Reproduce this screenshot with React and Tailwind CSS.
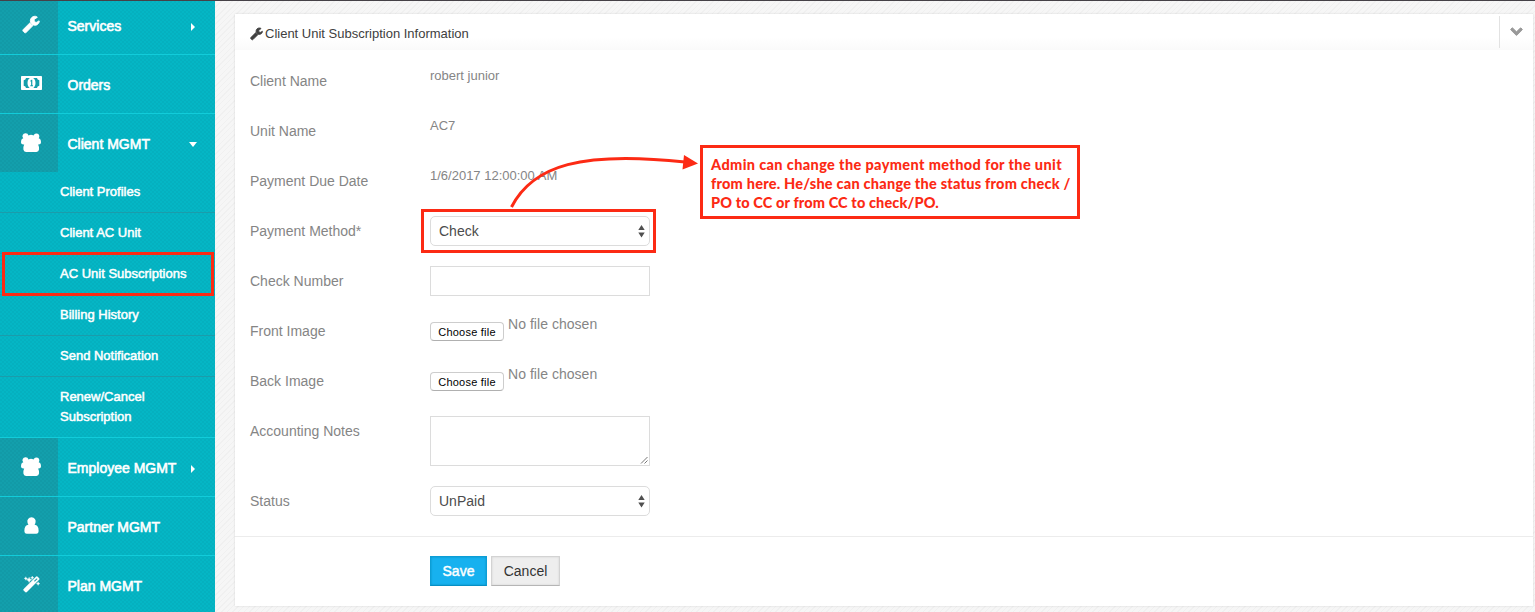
const PATHS = {
  wrench: ['0 0 1792 1792', 'M1092 1052l-682 682q-37 37-90 37-52 0-91-37l-106-108q-38-36-38-90 0-53 38-91l681-681q39 98 114.5 173.5t173.5 114.5zm634-435q0 39-23 106-47 134-164.5 217.5t-258.5 83.5q-185 0-316.5-131.5t-131.5-316.5 131.5-316.5 316.5-131.5q58 0 121.5 16.5t107.5 46.5q16 11 16 28t-16 28l-293 169v224l193 107q5-3 79-48.5t135.5-81 70.5-35.5q15 0 23.5 10t8.5 25z'],
  users: ['0 0 20 19', 'M4.500 .2a3 3 0 0 1 3 2.300q2.500-1.500 5 0a3 3 0 1 1 5.200 2.800q2.300 .5 2.300 4.200 0 1.900-2.400 1.900h-.5q1.200 2 .9 5.200-.2 2.400-2.600 2.400H5q-2.400 0-2.600-2.400-.3-3.200 .8-5.200h-.8Q0 11.400 0 9.500q0-3.700 2.300-4.200A3 3 0 0 1 4.500 .2z'],
  user: ['0 0 16 18', 'M8 .3a4.400 4.400 0 0 1 4.200 5.900l-.9 2.100q4.300 .6 4.300 6.300 0 3.100-2.600 3.100H3Q.4 17.700 .4 14.600q0-5.700 4.300-6.300l-.9-2.100A4.400 4.400 0 0 1 8 .3z'],
  magic: ['0 0 18 18', 'M13.800 .8q.8-.8 1.600 0l1.500 1.500q.8 .8 0 1.600L4 16.900q-.8 .8-1.600 0L.8 15.300q-.8-.8 0-1.600zM14.400 2.300L11.500 5.200l1 1 2.900-2.900zM3 .7l.6 1.300 1.300.6-1.300.6L3 4.500l-.6-1.300-1.300-.6L2.400 2zM6.500 1.200l.9 2 2 .9-2 .9-.9 2-.9-2-2-.9 2-.9zM9.800 0l.6 1.300 1.300.6-1.300.6-.6 1.300-.6-1.300-1.300-.6 1.300-.6zM16 6.200l.6 1.300 1.300.6-1.300.6L16 10l-.6-1.300-1.300-.6 1.300-.6z'],
  chevron: ['0 0 1792 1792', 'M1683 808l-742 741q-19 19-45 19t-45-19l-742-741q-19-19-19-45.5t19-45.5l166-165q19-19 45-19t45 19l531 531 531-531q19-19 45-19t45 19l166 165q19 19 19 45.5t-19 45.5z'],
};

function Icon({ name, className }) {
  if (name === 'money') {
    return (
      <svg viewBox="0 0 21 14" className={className} aria-hidden="true">
        <rect width="21" height="14" rx="0.8" fill="#fff" />
        <path d="M5 2h11q.2 2 2.300 2.300v5.400Q16.200 10 16 12H5q-.2-2-2.300-2.300V4.300Q4.800 4 5 2z" fill="#139fac" />
        <ellipse cx="10.500" cy="7" rx="4" ry="5.600" fill="#fff" />
        <path d="M9.300 4.800l1.200-1h.8v5.400h.7v1H9.300v-1h.8V5.400l-.4.300z" fill="#139fac" />
      </svg>
    );
  }
  const [box, d] = PATHS[name];
  return (
    <svg viewBox={box} className={`overflow-visible ${className}`} fill="currentColor" aria-hidden="true">
      <path d={d} stroke="currentColor" />
    </svg>
  );
}

function Caret({ open }) {
  return (
    <svg viewBox="0 0 8 8" className="mt-[3px] mr-[18px] size-2" fill="#fff" aria-hidden="true">
      <path d={open ? 'M0 1h8L4 6z' : 'M2 0l4 4-4 4z'} />
    </svg>
  );
}

function NavItem({ icon, iconClass, label, caret, className = 'h-[59px] border-b' }) {
  return (
    <div className={`flex shrink-0 border-[#12ccda] ${className}`}>
      <div className="flex w-[58px] items-center justify-center bg-[#139fac] bg-[repeating-conic-gradient(#00000008_0_25%,transparent_0_50%)] bg-size-[4px_4px] pb-0.5 pl-1">
        <Icon name={icon} className={iconClass} />
      </div>
      <div className="flex flex-1 items-center pl-[9.5px]">
        <span className="flex-1 pt-0.5 text-sm whitespace-nowrap [-webkit-text-stroke:0.6px_#fff]">{label}</span>
        {caret && <Caret open={caret === 'open'} />}
      </div>
    </div>
  );
}

const SUB_ITEMS = ['Client Profiles', 'Client AC Unit', 'AC Unit Subscriptions', 'Billing History', 'Send Notification'];

function Sidebar() {
  return (
    <nav className="flex w-[215px] shrink-0 flex-col overflow-hidden bg-[#05b6c5] bg-[repeating-conic-gradient(#00000008_0_25%,transparent_0_50%)] bg-size-[4px_4px] text-white">
      <NavItem icon="wrench" iconClass="size-[18px] stroke-[90]" label="Services" caret="closed" className="-mt-[5px] h-[59px] border-b" />
      <NavItem icon="money" iconClass="h-[14px] w-[21px]" label="Orders" />
      <NavItem icon="users" iconClass="mt-px h-[19px] w-5 stroke-0" label="Client MGMT" caret="open" className="h-[58px]" />
      <ul className="text-[13px] leading-5 [-webkit-text-stroke:0.5px_#fff]">
        {SUB_ITEMS.map((item) => (
          <li key={item} className="h-[41px] border-b border-[#1b9cab] pt-[10px] pl-[60px] whitespace-nowrap">{item}</li>
        ))}
        <li className="h-[61px] border-b border-[#12ccda] pt-[10px] pr-12 pl-[60px]">Renew/Cancel Subscription</li>
      </ul>
      <NavItem icon="users" iconClass="h-[19px] w-5 stroke-0" label="Employee MGMT" caret="closed" />
      <NavItem icon="user" iconClass="mt-px h-[17px] w-[15px] stroke-0" label="Partner MGMT" />
      <NavItem icon="magic" iconClass="size-[17px] stroke-[0.3]" label="Plan MGMT" />
    </nav>
  );
}

function Row({ label, children, className = 'h-[50px]' }) {
  return (
    <div className={`flex items-start ${className}`}>
      <div className="w-[180px] shrink-0 leading-[30px]">{label}</div>
      {children}
    </div>
  );
}

function SelectBox({ value }) {
  return (
    <div className="flex h-[30px] w-[220px] items-center justify-between rounded-[5px] border border-[#dcdcdc] bg-white pr-1 pl-2 text-[#4c4c4c]">
      <span>{value}</span>
      <svg viewBox="0 0 7 14" className="h-3.5 w-[7px]" fill="#505050" aria-hidden="true">
        <path d="M3.500 1L6.700 6H.3zM3.500 13.500L.3 8.500h6.400z" />
      </svg>
    </div>
  );
}

function FileInput() {
  return (
    <div className="flex items-start">
      <button className="mt-[6px] h-[19px] w-[74px] rounded-[4px] border border-[#cdcdcd] border-b-[#b0b0b0] bg-white pt-px text-[11px] leading-[17px] tracking-[0.22px] whitespace-nowrap text-black">Choose file</button>
      <span className="ml-1 leading-[17px] tracking-[0.04px]">No file chosen</span>
    </div>
  );
}

export default function App() {
  return (
    <div className="relative flex h-[612px] w-[1535px] overflow-hidden border-t border-[#454147] bg-[#f6f6f6] font-['Liberation_Sans',Arial,sans-serif] text-sm text-[#858585]">
      <Sidebar />
      <main className="min-w-0 flex-1 bg-[repeating-linear-gradient(135deg,#00000006_0_1px,transparent_1px_4px)] pt-[13px] pl-5">
        <section className="h-[592px] w-[1298px] bg-white shadow-[0_0_2px_#00000020]">
          <header className="flex h-9 items-start justify-between bg-linear-to-b from-white from-65% to-[#fafafa]">
            <h1 className="flex items-center gap-0.5 pt-2 pl-[15px] text-[13px] leading-6 text-[#404040]">
              <Icon name="wrench" className="mb-0.5 size-[13px] stroke-[110]" />
              <span>Client Unit Subscription Information</span>
            </h1>
            <div className="mt-0.5 flex h-8 w-[34px] justify-center border-l border-[#e2e2e2] pt-2 text-[#999]">
              <Icon name="chevron" className="size-[13px] stroke-[130]" />
            </div>
          </header>
          <div className="h-[487px] border-b border-[#ececec] pt-4 pl-[15px]">
            <Row label="Client Name"><span className="text-[13px] leading-5">robert junior</span></Row>
            <Row label="Unit Name"><span className="text-[13px] leading-5">AC7</span></Row>
            <Row label="Payment Due Date"><span className="text-[13px] leading-5">1/6/2017 12:00:00 AM</span></Row>
            <Row label="Payment Method*"><SelectBox value="Check" /></Row>
            <Row label="Check Number"><div className="h-[30px] w-[220px] border border-[#dcdcdc]" /></Row>
            <Row label="Front Image"><FileInput /></Row>
            <Row label="Back Image"><FileInput /></Row>
            <Row label="Accounting Notes" className="h-[70px]">
              <div className="flex h-[50px] w-[220px] items-end justify-end border border-[#dcdcdc]">
                <svg viewBox="0 0 9 9" className="size-[9px]" stroke="#666" strokeWidth="0.9" aria-hidden="true">
                  <path d="M1 7.500L7.500 1M4.500 7.500L7.500 4.500" />
                </svg>
              </div>
            </Row>
            <Row label="Status"><SelectBox value="UnPaid" /></Row>
          </div>
          <div className="flex gap-1 pt-[19px] pl-[195px]">
            <button className="h-[30px] w-[57px] border border-[#0c9ed6] border-b-[#078fc4] bg-[#17b1ef] text-white shadow-[inset_0_0_2px_#0888b8] [-webkit-text-stroke:0.45px_#fff]">Save</button>
            <button className="h-[30px] w-[69px] border border-[#d3d3d3] border-b-[#b5b5b5] bg-[#eee] text-[#333] shadow-[inset_0_0_2px_#ccc]">Cancel</button>
          </div>
        </section>
      </main>

      <div className="absolute top-[251px] left-[2px] h-[44px] w-[212px] border-3 border-[#fc2a14]" />
      <div className="absolute top-[208px] left-[421px] h-[44px] w-[235px] border-3 border-[#fc2a14]" />
      <svg viewBox="500 145 200 70" className="absolute top-[144px] left-[500px] h-[70px] w-[200px]" fill="none" aria-hidden="true">
        <path d="M511.500 207C533 165 582 151 685 162" stroke="#fc2a14" strokeWidth="3" />
        <path d="M684 155L698 163.500L682.500 169.500Z" fill="#fc2a14" />
      </svg>
      <div className="absolute top-[144px] left-[700px] h-[74px] w-[380px] border-3 border-[#fc2a14] bg-white pt-[7px] pl-2 font-['Lato',sans-serif] text-[14.5px] leading-[19px] font-black whitespace-nowrap text-[#fc2a14]">
        <div className="tracking-[0.37px]">Admin can change the payment method for the unit</div>
        <div className="tracking-[0.23px]">from here. He/she can change the status from check /</div>
        <div className="tracking-[0.13px]">PO to CC or from CC to check/PO.</div>
      </div>
    </div>
  );
}
